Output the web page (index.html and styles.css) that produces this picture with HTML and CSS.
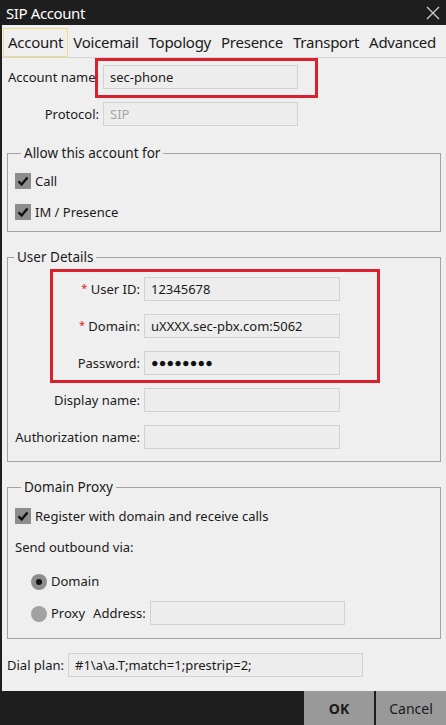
FILE: index.html
```html
<!DOCTYPE html>
<html lang="en">
<head>
  <meta charset="UTF-8">
  <meta name="viewport" content="width=device-width, initial-scale=1.0">
  <link rel="stylesheet" href="styles.css">
  <title>SIP Account</title>
</head>
<body>

<div class="window">
  <div class="titlebar">
    <span class="title">SIP Account</span>
    <svg class="close" width="14" height="14" viewBox="0 0 14 14">
      <path d="M1 1 L13 13 M13 1 L1 13" stroke="#c8c8c8" stroke-width="1.4" fill="none"/>
    </svg>
  </div>

  <div class="tabs">
    <span class="tab active">Account</span>
    <span class="tab">Voicemail</span>
    <span class="tab">Topology</span>
    <span class="tab">Presence</span>
    <span class="tab">Transport</span>
    <span class="tab">Advanced</span>
  </div>

  <div class="content">
    <div class="row row-top marked">
      <label class="lbl lbl-top">Account name:</label>
      <div class="field field-top">sec-phone</div>
      <span class="mark mark-account"></span>
    </div>
    <div class="row row-top">
      <label class="lbl lbl-top">Protocol:</label>
      <div class="field field-top disabled">SIP</div>
    </div>

    <!-- Allow this account for -->
    <fieldset class="group group-allow">
      <legend>Allow this account for</legend>
      <div class="check-row">
        <span class="checkbox">
          <svg width="16" height="16" viewBox="0 0 16 16"><path d="M3.5 8.2 L6.6 11.5 L12.5 4.5" stroke="#111" stroke-width="2.4" fill="none"/></svg>
        </span>
        Call
      </div>
      <div class="check-row">
        <span class="checkbox">
          <svg width="16" height="16" viewBox="0 0 16 16"><path d="M3.5 8.2 L6.6 11.5 L12.5 4.5" stroke="#111" stroke-width="2.4" fill="none"/></svg>
        </span>
        IM / Presence
      </div>
    </fieldset>

    <!-- User Details -->
    <fieldset class="group group-user">
      <legend>User Details</legend>
      <div class="marked">
        <span class="mark mark-user"></span>
        <div class="row row-user">
          <label class="lbl lbl-user"><span class="req">*</span> User ID:</label>
          <div class="field field-user">12345678</div>
        </div>
        <div class="row row-user">
          <label class="lbl lbl-user"><span class="req">*</span> Domain:</label>
          <div class="field field-user">uXXXX.sec-pbx.com:5062</div>
        </div>
        <div class="row row-user">
          <label class="lbl lbl-user">Password:</label>
          <div class="field field-user dots">&#9679;&#9679;&#9679;&#9679;&#9679;&#9679;&#9679;&#9679;</div>
        </div>
      </div>
      <div class="row row-user">
        <label class="lbl lbl-user">Display name:</label>
        <div class="field field-user"></div>
      </div>
      <div class="row row-user last">
        <label class="lbl lbl-user">Authorization name:</label>
        <div class="field field-user"></div>
      </div>
    </fieldset>

    <!-- Domain Proxy -->
    <fieldset class="group group-proxy">
      <legend>Domain Proxy</legend>
      <div class="check-row">
        <span class="checkbox">
          <svg width="16" height="16" viewBox="0 0 16 16"><path d="M3.5 8.2 L6.6 11.5 L12.5 4.5" stroke="#111" stroke-width="2.4" fill="none"/></svg>
        </span>
        Register with domain and receive calls
      </div>
      <div class="text-row">Send outbound via:</div>
      <div class="radio-row">
        <span class="radio selected"></span>
        Domain
      </div>
      <div class="radio-row proxy-row">
        <span class="radio"></span>
        <span class="proxy-lbl">Proxy</span>
        <span class="addr-lbl">Address:</span>
        <div class="field field-proxy"></div>
      </div>
    </fieldset>

    <div class="row row-dial">
      <label class="lbl lbl-dial">Dial plan:</label>
      <div class="field field-dial">#1\a\a.T;match=1;prestrip=2;</div>
    </div>
  </div>

  <div class="footer">
    <button class="btn btn-ok">OK</button>
    <button class="btn">Cancel</button>
  </div>
</div>

</body>
</html>
```

FILE: styles.css
```css
body {
  margin: 0;
  padding: 0;
  font-family: "Noto Sans", "Open Sans", Arial, sans-serif;
  font-size: 13px;
  color: #1a1a1a;
  background: #efefef;
}

.window {
  width: 446px;
  height: 725px;
  box-sizing: border-box;
  border-left: 2px solid #1e1e1e;
  background: #efefef;
  display: flex;
  flex-direction: column;
}

.titlebar {
  height: 25px;
  margin-left: -2px;
  padding: 0 6px;
  background: #1e1e1e;
  color: #fff;
  display: flex;
  align-items: center;
  justify-content: space-between;
}

.title {
  font-size: 15px;
  letter-spacing: -0.4px;
}

.tabs {
  height: 29px;
  padding-top: 3px;
  padding-left: 1px;
  border-bottom: 1px solid #d4d4d4;
  display: flex;
}

.tab {
  font-size: 15px;
  line-height: 27px;
  padding: 0 4px;
  border: 1px solid transparent;
  color: #1a1a1a;
  letter-spacing: -0.25px;
}

.tab.active {
  border-color: #eedd85;
}

.content {
  padding: 7px 5px 0 5px;
}

.row {
  display: flex;
  align-items: center;
  height: 24px;
}

.marked {
  position: relative;
}

.lbl {
  text-align: right;
  white-space: nowrap;
  padding-right: 4px;
  box-sizing: border-box;
}

.field {
  height: 24px;
  box-sizing: border-box;
  border: 1px solid #d2d2d2;
  background: #ededed;
  padding: 0 6px;
  line-height: 22px;
  white-space: nowrap;
  overflow: hidden;
}

.field.disabled {
  color: #a6a6a6;
}

.row-top {
  margin-bottom: 13px;
}

.lbl-top {
  width: 96px;
}

.field-top {
  width: 195px;
}

.mark {
  position: absolute;
  border: 3px solid #d9202c;
  box-sizing: border-box;
  pointer-events: none;
}

.mark-account {
  left: 88px;
  top: -7px;
  width: 223px;
  height: 40px;
}

.mark-user {
  left: 42px;
  top: -8px;
  width: 330px;
  height: 114px;
}

/* groups */
.group {
  margin: 18px 0 0 0;
  padding: 0;
  border: 1px solid #a3a3a3;
}

.group legend {
  margin-left: 6px;
  padding: 0 3px;
  font-size: 13.5px;
  line-height: 18px;
}

.group-allow {
  padding: 9px 0 9px 7px;
}

.group-user {
  margin-top: 16px;
  padding: 11px 0 12px 0;
}

.group-proxy {
  margin-top: 16px;
  padding: 10px 0 13px 7px;
}

.check-row {
  display: flex;
  align-items: center;
  height: 20px;
  gap: 4px;
}

.group-allow .check-row + .check-row {
  margin-top: 11px;
}

.checkbox {
  width: 16px;
  height: 16px;
  background: #8d8d8d;
  display: inline-block;
}

.checkbox svg {
  display: block;
}

.row-user {
  margin-bottom: 13px;
}

.row-user.last {
  margin-bottom: 0;
}

.lbl-user {
  width: 136px;
}

.req {
  color: #d9202c;
  font-size: 11px;
  vertical-align: 2px;
}

.field-user {
  width: 196px;
}

.dots {
  font-size: 12.5px;
  letter-spacing: 0.2px;
  color: #111;
}

.text-row {
  height: 20px;
  line-height: 20px;
  margin-top: 11px;
}

.radio-row {
  display: flex;
  align-items: center;
  height: 20px;
  padding-left: 16px;
  margin-top: 14px;
  gap: 4px;
}

.proxy-row {
  height: 24px;
  margin-top: 10px;
}

.radio {
  width: 16px;
  height: 16px;
  border-radius: 50%;
  background: #a2a2a2;
  position: relative;
  margin-top: 2px;
}

.radio.selected {
  background: #8d8d8d;
}

.radio.selected::after {
  content: '';
  position: absolute;
  left: 5px;
  top: 5px;
  width: 6px;
  height: 6px;
  border-radius: 50%;
  background: #111;
}

.addr-lbl {
  margin-left: 4px;
}

.field-proxy {
  width: 195px;
}

.row-dial {
  margin-top: 14px;
}

.lbl-dial {
  width: 61px;
  text-align: left;
}

.field-dial {
  width: 295px;
}

/* footer */
.footer {
  margin-top: auto;
  margin-left: -2px;
  height: 34px;
  background: #1e1e1e;
  display: flex;
  justify-content: flex-end;
  gap: 2px;
}

.btn {
  width: 70px;
  height: 34px;
  border: none;
  background: #999999;
  color: #1a1a1a;
  font-family: "Noto Sans", "Open Sans", Arial, sans-serif;
  font-size: 14px;
  padding: 0;
}

.btn-ok {
  font-weight: bold;
}
```
